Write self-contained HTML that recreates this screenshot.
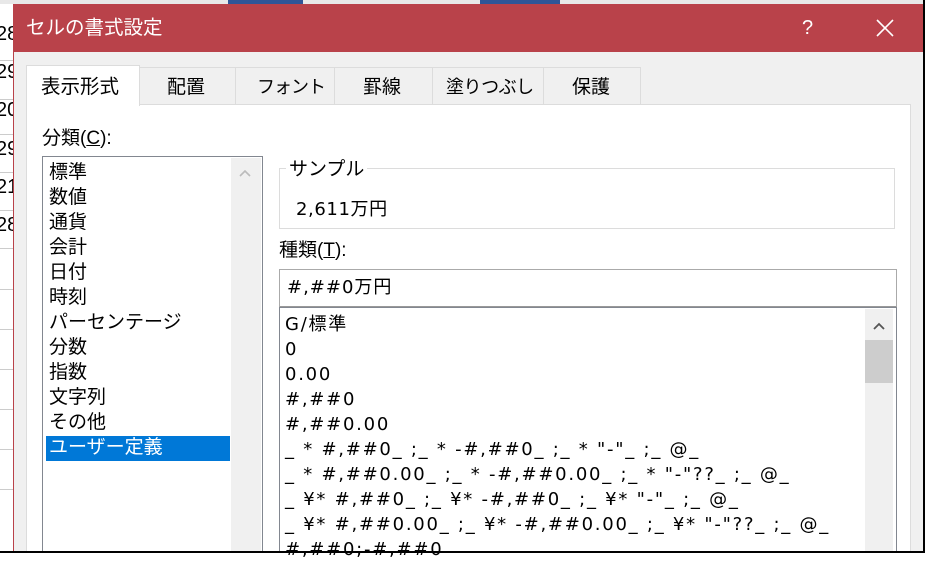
<!DOCTYPE html>
<html><head><meta charset="utf-8"><style>
*{margin:0;padding:0;box-sizing:border-box}
body{width:925px;height:553px;overflow:hidden;background:#fff;position:relative;font-family:"Liberation Sans","Noto Sans CJK JP",sans-serif;color:#000}
.abs{position:absolute}
.t{font-size:18px;line-height:25px;white-space:nowrap}
.w{font-family:"DejaVu Sans","Noto Sans CJK JP",sans-serif;font-size:17px;letter-spacing:0.6px}
.l{font-family:"DejaVu Sans","Noto Sans CJK JP",sans-serif;font-size:18px;letter-spacing:1.75px}
</style></head><body>
<div class="abs" style="left:0;top:0;width:925px;height:4px;background:#e8e8e8"></div>
<div class="abs" style="left:228px;top:0;width:75px;height:4px;background:#2f5597"></div>
<div class="abs" style="left:480px;top:0;width:80px;height:4px;background:#2f5597"></div>
<div class="abs" style="left:0;top:4px;width:14px;height:549px;background:#fff">
 <div class="abs t" style="left:-4px;top:18px;font-size:20px">28</div>
 <div class="abs" style="left:0;top:56px;width:14px;height:1px;background:#ccc"></div>
 <div class="abs t" style="left:-4px;top:56px;font-size:20px">29</div>
 <div class="abs" style="left:0;top:95px;width:14px;height:1px;background:#ccc"></div>
 <div class="abs t" style="left:-4px;top:94px;font-size:20px">20</div>
 <div class="abs" style="left:0;top:130px;width:14px;height:1px;background:#ccc"></div>
 <div class="abs t" style="left:-4px;top:133px;font-size:20px">29</div>
 <div class="abs" style="left:0;top:168px;width:14px;height:1px;background:#ccc"></div>
 <div class="abs t" style="left:-4px;top:171px;font-size:20px">21</div>
 <div class="abs" style="left:0;top:206px;width:14px;height:1px;background:#ccc"></div>
 <div class="abs t" style="left:-4px;top:209px;font-size:20px">28</div>
 <div class="abs" style="left:0;top:244px;width:14px;height:1px;background:#ccc"></div>
 <div class="abs" style="left:0;top:285px;width:14px;height:1px;background:#ccc"></div>
 <div class="abs" style="left:0;top:325px;width:14px;height:1px;background:#ccc"></div>
 <div class="abs" style="left:0;top:365px;width:14px;height:1px;background:#ccc"></div>
 <div class="abs" style="left:0;top:405px;width:14px;height:1px;background:#ccc"></div>
 <div class="abs" style="left:0;top:445px;width:14px;height:1px;background:#ccc"></div>
 <div class="abs" style="left:0;top:485px;width:14px;height:1px;background:#ccc"></div>
</div>
<div class="abs" style="left:13px;top:4px;width:910px;height:549px;background:#f0f0f0;border-left:1px solid #b9424a">
 <div class="abs" style="left:0;top:0;width:910px;height:48px;background:#b9424a;color:#fff">
  <div class="abs t" style="left:12px;top:12px;font-size:19.5px">セルの書式設定</div>
  <div class="abs t" style="left:788px;top:12px;font-size:20px">?</div>
  <svg class="abs" style="left:862px;top:15px" width="18" height="18"><path d="M1 1L17 17M17 1L1 17" stroke="#fff" stroke-width="1.6"/></svg>
 </div>
</div>
<div class="abs" style="left:139px;top:67px;width:502px;height:38px;background:#f0f0f0;border:1px solid #dcdcdc;border-bottom:none"></div>
<div class="abs t" style="left:167px;top:75px;font-size:19px">配置</div>
<div class="abs" style="left:235px;top:67px;width:1px;height:37px;background:#dcdcdc"></div>
<div class="abs t" style="left:257px;top:75px;font-size:18px;letter-spacing:-1px">フォント</div>
<div class="abs" style="left:334px;top:67px;width:1px;height:37px;background:#dcdcdc"></div>
<div class="abs t" style="left:363px;top:75px;font-size:19px">罫線</div>
<div class="abs" style="left:432px;top:67px;width:1px;height:37px;background:#dcdcdc"></div>
<div class="abs t" style="left:446px;top:75px;font-size:18px;letter-spacing:-0.5px">塗りつぶし</div>
<div class="abs" style="left:543px;top:67px;width:1px;height:37px;background:#dcdcdc"></div>
<div class="abs t" style="left:572px;top:75px;font-size:19px">保護</div>
<div class="abs" style="left:26px;top:104px;width:885px;height:449px;background:#fff;border:1px solid #dcdcdc;border-bottom:none"></div>
<div class="abs" style="left:26px;top:65px;width:114px;height:41px;background:#fff;border:1px solid #dcdcdc;border-bottom:none"></div>
<div class="abs t" style="left:41px;top:75px;font-size:19.5px">表示形式</div>
<div class="abs t" style="left:42px;top:126px;font-size:19px">分類(<u>C</u>):</div>
<div class="abs" style="left:42px;top:156px;width:221px;height:397px;border:1px solid #828790;border-bottom:none;background:#fff"></div>
<div class="abs" style="left:231px;top:158px;width:30px;height:395px;background:#f0f0f0"></div>
<svg class="abs" style="left:239px;top:169px" width="12" height="8"><path d="M1 7L6 2L11 7" stroke="#bbb" stroke-width="1.6" fill="none"/></svg>
<div class="abs" style="left:46px;top:436px;width:184px;height:25px;background:#0078d7"></div>
<div class="abs t" style="left:49px;top:160px;font-size:19px">標準<br>数値<br>通貨<br>会計<br>日付<br>時刻<br>パーセンテージ<br>分数<br>指数<br>文字列<br>その他<br><span style="color:#fff">ユーザー定義</span></div>
<div class="abs" style="left:279px;top:168px;width:616px;height:61px;border:1px solid #dcdcdc"></div>
<div class="abs t" style="left:286px;top:157px;background:#fff;padding:0 3px;font-size:19px">サンプル</div>
<div class="abs t w" style="left:296px;top:197px;font-size:18px">2,611万円</div>
<div class="abs t" style="left:279px;top:238px;font-size:19px">種類(<u>T</u>):</div>
<div class="abs" style="left:279px;top:269px;width:618px;height:39px;border:1px solid #aaa;border-bottom:2px solid #999;background:#fff"></div>
<div class="abs t w" style="left:287px;top:275px;font-size:18px;letter-spacing:1px">#,##0万円</div>
<div class="abs" style="left:279px;top:307px;width:618px;height:246px;border:1px solid #828790;border-bottom:none;background:#fff"></div>
<div class="abs" style="left:865px;top:309px;width:28px;height:244px;background:#f0f0f0"></div>
<div class="abs" style="left:865px;top:340px;width:28px;height:43px;background:#cdcdcd"></div>
<svg class="abs" style="left:873px;top:322px" width="12" height="8"><path d="M1 7L6 2L11 7" stroke="#555" stroke-width="1.8" fill="none"/></svg>
<div class="abs t l" style="left:285px;top:312px">G/標準<br>0<br>0.00<br>#,##0<br>#,##0.00<br>_ * #,##0_ ;_ * -#,##0_ ;_ * "-"_ ;_ @_<br>_ * #,##0.00_ ;_ * -#,##0.00_ ;_ * "-"??_ ;_ @_<br>_ ¥* #,##0_ ;_ ¥* -#,##0_ ;_ ¥* "-"_ ;_ @_<br>_ ¥* #,##0.00_ ;_ ¥* -#,##0.00_ ;_ ¥* "-"??_ ;_ @_<br>#,##0;-#,##0</div>
<div class="abs" style="left:923px;top:0;width:2px;height:553px;background:#000"></div>
<div class="abs" style="left:0;top:551px;width:925px;height:2px;background:#000"></div>
</body></html>
